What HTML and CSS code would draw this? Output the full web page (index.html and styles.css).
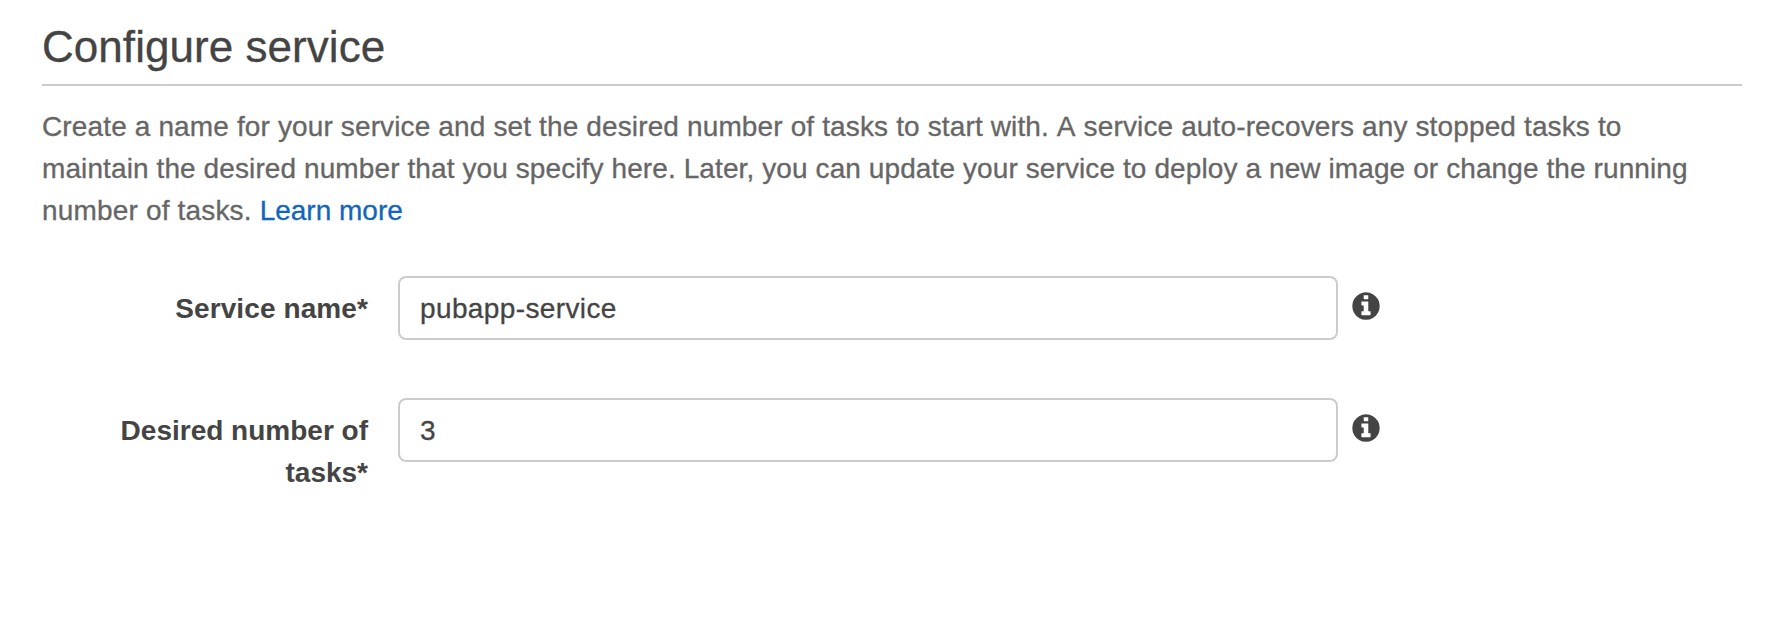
FILE: index.html
```html
<!DOCTYPE html>
<html lang="en">
<head>
<meta charset="utf-8">
<title>Configure service</title>
<link rel="stylesheet" href="styles.css">
</head>
<body>
<main class="page">
  <h1 class="title"><span class="title-text">Configure service</span></h1>
  <p class="intro"><span class="l1">Create a name for your service and set the desired number of tasks to start with. A service auto-recovers any stopped tasks to</span><br><span class="l2">maintain the desired number that you specify here. Later, you can update your service to deploy a new image or change the running</span><br><span class="l3">number of tasks. <a class="link" href="#">Learn more</a></span></p>
  <form class="form">
    <div class="row">
      <label class="label name-label" for="name">Service name*</label>
      <input class="input" id="name" type="text" value="pubapp-service">
      <svg class="info" viewBox="-16 -16 1568 1568" aria-hidden="true"><path d="M1024 1248v-160q0-14-9-23t-23-9h-96V544q0-14-9-23t-23-9H544q-14 0-23 9t-9 23v160q0 14 9 23t23 9h96v320h-96q-14 0-23 9t-9 23v160q0 14 9 23t23 9h448q14 0 23-9t9-23zM896 352V192q0-14-9-23t-23-9H672q-14 0-23 9t-9 23v160q0 14 9 23t23 9h192q14 0 23-9t9-23zM1536 768q0 209-103 385.500T1153.500 1433 768 1536t-385.500-103T103 1153.500 0 768t103-385.500T382.500 103 768 0t385.500 103T1433 382.500 1536 768z"/></svg>
    </div>
    <div class="row">
      <label class="label" for="tasks">Desired number of tasks*</label>
      <input class="input" id="tasks" type="text" value="3">
      <svg class="info" viewBox="-16 -16 1568 1568" aria-hidden="true"><path d="M1024 1248v-160q0-14-9-23t-23-9h-96V544q0-14-9-23t-23-9H544q-14 0-23 9t-9 23v160q0 14 9 23t23 9h96v320h-96q-14 0-23 9t-9 23v160q0 14 9 23t23 9h448q14 0 23-9t9-23zM896 352V192q0-14-9-23t-23-9H672q-14 0-23 9t-9 23v160q0 14 9 23t23 9h192q14 0 23-9t9-23zM1536 768q0 209-103 385.500T1153.500 1433 768 1536t-385.500-103T103 1153.500 0 768t103-385.500T382.500 103 768 0t385.500 103T1433 382.500 1536 768z"/></svg>
    </div>
  </form>
</main>
</body>
</html>
```
FILE: styles.css
```css
* { box-sizing: border-box; }
body {
  margin: 0;
  min-height: 100vh;
  background: #fff;
  color: #444;
  font-family: "Liberation Sans", Arial, sans-serif;
  font-size: 28px;
  line-height: 42px;
}
.page { min-height: 100vh; padding: 20px 36px 0 42px; }
.title {
  margin: 0;
  height: 66px;
  border-bottom: 2px solid #ccc;
  font-size: 44px;
  font-weight: 400;
  line-height: 54px;
}
.title-text { letter-spacing: 0.05px; -webkit-text-stroke: 0.3px #444; }
.intro {
  margin: 20px 0 0;
  color: #666;
  white-space: nowrap;
  -webkit-text-stroke: 0.3px currentColor;
}
.l1 { font-kerning: none; letter-spacing: 0.135px; }
.l2 { letter-spacing: 0.1px; }
.l3 { letter-spacing: 0.17px; }
.link { color: #1166bb; letter-spacing: 0; text-decoration: none; }
.form {
  display: flex;
  flex-direction: column;
  gap: 58px;
  margin-top: 44px;
}
.row {
  display: flex;
  align-items: flex-start;
}
.label {
  width: 326px;
  padding: 12px 0 0 60px;
  margin-right: 30px;
  font-weight: 700;
  text-align: right;
}
.name-label { letter-spacing: 0.1px; }
.input {
  width: 940px;
  height: 64px;
  padding: 2px 20px 0;
  border: 2px solid #ccc;
  border-radius: 8px;
  background: #fff;
  color: #444;
  font: inherit;
  letter-spacing: 0.38px;
  outline: none;
  -webkit-text-stroke: 0.3px #444;
}
.info {
  width: 28px;
  height: 28px;
  margin: 16px 0 0 14px;
  fill: #444;
}
```
